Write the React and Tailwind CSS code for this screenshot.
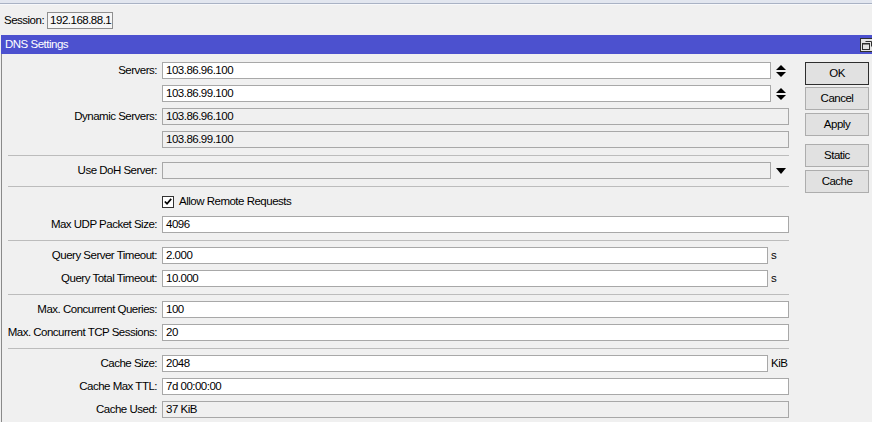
import React from 'react';

function Box({ children, disabled = false, className = '' }) {
  return (
    <div
      className={`flex h-[17px] flex-1 items-center whitespace-nowrap border border-[#a8a8a8] pl-[3px] leading-none ${
        disabled ? 'bg-[#f0f0f0]' : 'bg-white'
      } ${className}`}
    >
      {children}
    </div>
  );
}

function Row({ label, children }) {
  return (
    <div className="flex h-[23px] items-start">
      <div className="flex h-[17px] w-[155px] shrink-0 items-center justify-end whitespace-nowrap leading-none">
        {label}
      </div>
      <div className="ml-[5px] flex h-[17px] flex-1 items-center">{children}</div>
    </div>
  );
}

function Sep() {
  return (
    <div className="h-[8px] pl-[6px] pt-[1px]">
      <div className="h-px bg-[#bcbcbc]" />
    </div>
  );
}

function Spinner() {
  return (
    <div className="flex w-[18px] shrink-0 items-center pl-[5px]">
      <svg width="10" height="12" viewBox="0 0 10 12">
        <path d="M0 5 L5 0 L10 5 Z" fill="#000" />
        <path d="M0 7 L10 7 L5 12 Z" fill="#000" />
      </svg>
    </div>
  );
}

function Suffix({ children }) {
  return (
    <div className="flex w-[21px] shrink-0 items-center whitespace-nowrap pl-[3px] leading-none">
      {children}
    </div>
  );
}

function Button({ children, primary = false, className = '' }) {
  return (
    <div
      className={`flex h-[23px] items-center justify-center border bg-[#e1e1e1] leading-none ${
        primary ? 'border-[#2e2e2e]' : 'border-[#adadad]'
      } ${className}`}
    >
      {children}
    </div>
  );
}

export default function App() {
  return (
    <div className="h-[422px] w-[872px] overflow-hidden bg-[#f0f0f0] font-['Liberation_Sans',Arial,sans-serif] text-[11.5px] tracking-[-0.5px] text-black">
      <div className="h-[4px] border-b border-[#a9b2c4] bg-[#e2e6ef]" />
      <div className="h-px bg-[#f7f8fb]" />

      <div className="flex h-[30px] items-start pl-[4px] pt-[7px]">
        <div className="flex h-[17px] items-center leading-none">Session:</div>
        <div className="ml-[3px] flex h-[17px] w-[66px] items-center border border-[#8f8f8f] bg-[#f6f6f6] pl-[2px] leading-none">
          192.168.88.1
        </div>
      </div>

      <div className="pl-[1px]">
        <div className="flex h-[19px] items-center justify-between bg-[#4c51cf] pl-[4px] text-white">
          <span className="leading-none">DNS Settings</span>
          <svg width="14" height="14" viewBox="0 0 14 14" className="-mr-[2px]">
            <rect x="0.5" y="0.5" width="13" height="13" fill="#e4e4e4" stroke="#2f2f2f" />
            <path d="M5.5 3.5 H11.5 V8.5" fill="none" stroke="#2f2f2f" />
            <rect x="2.5" y="5.5" width="7" height="6" fill="none" stroke="#2f2f2f" />
            <path d="M3 6 H9" stroke="#2f2f2f" />
          </svg>
        </div>

        <div className="flex border-l border-[#8a8a8a] pt-[8px]">
          <div className="w-[787px] shrink-0">
            <Row label="Servers:">
              <Box>103.86.96.100</Box>
              <Spinner />
            </Row>
            <Row label="">
              <Box>103.86.99.100</Box>
              <Spinner />
            </Row>
            <Row label="Dynamic Servers:">
              <Box disabled>103.86.96.100</Box>
            </Row>
            <Row label="">
              <Box disabled>103.86.99.100</Box>
            </Row>
            <Sep />
            <Row label="Use DoH Server:">
              <Box disabled />
              <div className="flex w-[18px] shrink-0 items-center pl-[5px]">
                <svg width="10" height="6" viewBox="0 0 10 6">
                  <path d="M0 0 L10 0 L5 6 Z" fill="#000" />
                </svg>
              </div>
            </Row>
            <Sep />
            <Row label="">
              <div className="flex items-center gap-[5px] leading-none">
                <div className="flex h-[12px] w-[12px] items-center justify-center border border-[#333] bg-white">
                  <svg width="8" height="7" viewBox="0 0 8 7">
                    <path d="M0.8 3.5 L3 5.7 L7.2 0.9" fill="none" stroke="#000" strokeWidth="1.7" />
                  </svg>
                </div>
                <span>Allow Remote Requests</span>
              </div>
            </Row>
            <Row label="Max UDP Packet Size:">
              <Box>4096</Box>
            </Row>
            <Sep />
            <Row label="Query Server Timeout:">
              <Box>2.000</Box>
              <Suffix>s</Suffix>
            </Row>
            <Row label="Query Total Timeout:">
              <Box>10.000</Box>
              <Suffix>s</Suffix>
            </Row>
            <Sep />
            <Row label="Max. Concurrent Queries:">
              <Box>100</Box>
            </Row>
            <Row label="Max. Concurrent TCP Sessions:">
              <Box>20</Box>
            </Row>
            <Sep />
            <Row label="Cache Size:">
              <Box>2048</Box>
              <Suffix>KiB</Suffix>
            </Row>
            <Row label="Cache Max TTL:">
              <Box>7d 00:00:00</Box>
            </Row>
            <Row label="Cache Used:">
              <Box disabled>37 KiB</Box>
            </Row>
          </div>

          <div className="ml-[16px] flex w-[64px] shrink-0 flex-col">
            <Button primary>OK</Button>
            <Button className="mt-[2px]">Cancel</Button>
            <Button className="mt-[3px]">Apply</Button>
            <Button className="mt-[8px]">Static</Button>
            <Button className="mt-[3px]">Cache</Button>
          </div>
        </div>
      </div>
    </div>
  );
}
